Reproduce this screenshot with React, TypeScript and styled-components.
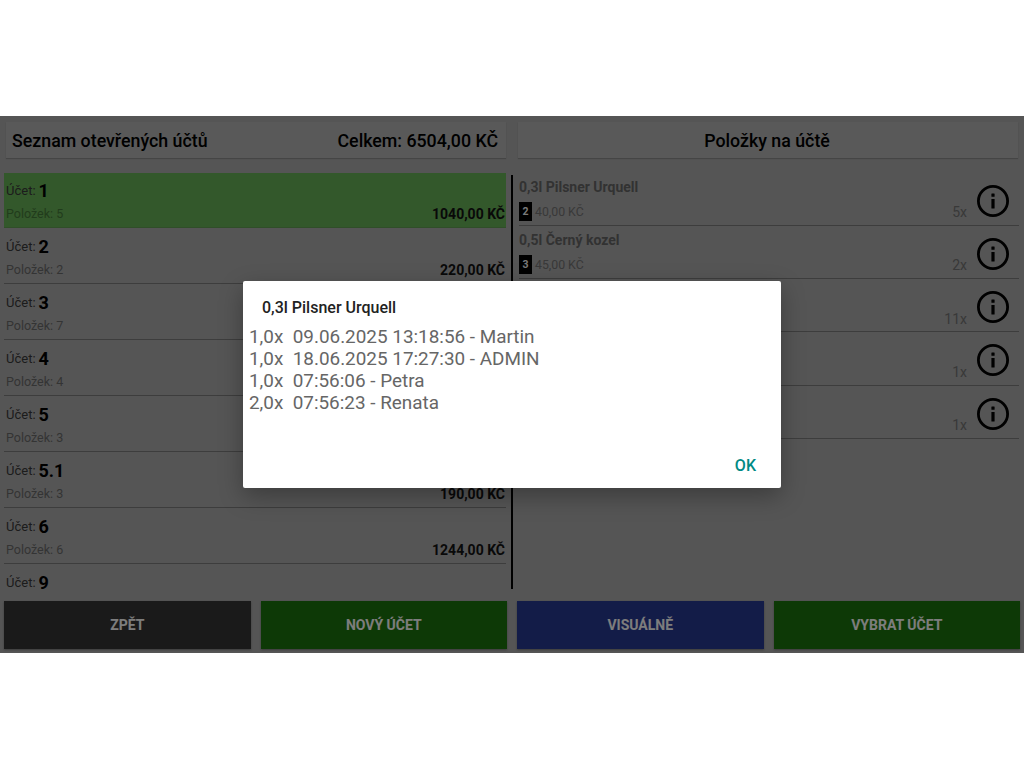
import React from 'react';
import styled, {createGlobalStyle} from 'styled-components';

const GlobalStyle = createGlobalStyle`
  html, body {
    margin: 0;
    background: #fff;
    font-family: Roboto, "Liberation Sans", sans-serif;
  }
`;

const Page = styled.div`
  height: 768px;
  display: flex;
  align-items: center;
`;

const Screen = styled.div`
  position: relative;
  width: 1024px;
  height: 537px;
  background: #9b9b9b;
  display: flex;
  flex-direction: column;
  overflow: hidden;
`;

const HeaderRow = styled.div`
  display: grid;
  grid-template-columns: 500px 500px;
  column-gap: 12px;
  padding: 6px 6px 0;
`;

const HeaderBar = styled.div<{$center?: boolean}>`
  height: 36px;
  box-sizing: border-box;
  padding: 2px 8px 0 6px;
  background: #a3a3a3;
  box-shadow: 0 1px 1px rgba(0, 0, 0, 0.18);
  display: flex;
  align-items: center;
  justify-content: ${p => (p.$center ? 'center' : 'space-between')};
  font-size: 17.8px;
  font-weight: 500;
  color: #000;
`;

const Lists = styled.div`
  height: 418px;
  margin-top: 15px;
  display: flex;
`;

const AccountList = styled.div`
  width: 502px;
  margin-left: 4px;
`;

const AccountRow = styled.div<{$active?: boolean}>`
  height: 56px;
  box-sizing: border-box;
  padding: 1px 1px 0 2px;
  background: ${p => (p.$active ? '#5ea04f' : 'transparent')};
  border-bottom: 1px solid ${p => (p.$active ? '#588f4b' : '#707070')};
  display: flex;
  flex-direction: column;

  &:first-child {
    height: 55px;
    padding-top: 0;
  }

  &:last-child {
    border-bottom: none;
  }
`;

const AccountTitle = styled.div`
  height: 30px;
  display: flex;
  align-items: flex-end;
  gap: 3px;
  font-size: 13px;
  line-height: 24px;
  color: #333;
`;

const AccountNumber = styled.span`
  font-size: 18px;
  font-weight: 700;
  color: #000;
`;

const AccountMeta = styled.div`
  display: flex;
  justify-content: space-between;
  align-items: center;
  height: 18px;
  margin-top: 2px;
`;

const MetaLabel = styled.span<{$active?: boolean}>`
  font-size: 12.5px;
  color: ${p => (p.$active ? '#3d6e33' : '#5f5f5f')};
`;

const Price = styled.span`
  font-size: 14px;
  font-weight: 700;
  color: #111;
`;

const Divider = styled.div`
  width: 2px;
  height: 414px;
  margin: 2px 6px 0 5px;
  background: #000;
`;

const ItemList = styled.div`
  width: 500px;
`;

const ItemRow = styled.div`
  height: 53.3px;
  box-sizing: border-box;
  border-bottom: 1px solid #707070;
  position: relative;
`;

const ItemName = styled.div`
  height: 29px;
  padding-top: 5px;
  box-sizing: border-box;
  font-size: 14px;
  line-height: 18px;
  font-weight: 700;
  color: #5c5c5c;
`;

const ItemMeta = styled.div`
  display: flex;
  align-items: center;
  gap: 3px;
  height: 19px;
  padding-right: 52px;
`;

const Badge = styled.span`
  width: 13px;
  height: 19px;
  background: #000;
  color: #ddd;
  font-size: 10.5px;
  font-weight: 700;
  display: flex;
  align-items: center;
  justify-content: center;
`;

const ItemPrice = styled.span`
  flex: 1;
  font-size: 12.3px;
  color: #686868;
  position: relative;
  top: 1px;
`;

const ItemQuantity = styled.span`
  font-size: 14px;
  color: #686868;
  position: relative;
  top: 1px;
`;

const InfoButton = styled.svg`
  position: absolute;
  right: 9px;
  top: 11px;
  width: 34px;
  height: 34px;
`;

const ButtonRow = styled.div`
  display: grid;
  grid-template-columns: repeat(4, 246.5px);
  column-gap: 10px;
  margin-top: 10px;
  padding-left: 4px;
  position: relative;
`;

const ActionButton = styled.div<{$color: string}>`
  height: 48px;
  box-sizing: border-box;
  padding-top: 1px;
  background: ${p => p.$color};
  box-shadow: 0 1px 2px rgba(0, 0, 0, 0.3);
  display: flex;
  align-items: center;
  justify-content: center;
  color: #e4e4e4;
  font-size: 14px;
  font-weight: 700;
`;

const Overlay = styled.div`
  position: absolute;
  inset: 0;
  background: rgba(0, 0, 0, 0.45);
  display: flex;
  align-items: center;
  justify-content: center;
`;

const Dialog = styled.div`
  width: 538px;
  height: 207px;
  background: #fff;
  border-radius: 2px;
  box-shadow: 0 8px 24px rgba(0, 0, 0, 0.3);
  box-sizing: border-box;
  padding: 17px 6px 0;
  display: flex;
  flex-direction: column;
`;

const DialogTitle = styled.div`
  padding-left: 13px;
  height: 20px;
  font-size: 16px;
  line-height: 20px;
  font-weight: 500;
  color: #222;
`;

const DialogBody = styled.div`
  flex: 1;
  margin-top: 8px;
  font-size: 18.9px;
  line-height: 22px;
  color: #666;
  white-space: pre;
`;

const DialogActions = styled.div`
  display: flex;
  justify-content: flex-end;
  padding: 0 19px 12px 0;
`;

const DialogButton = styled.span`
  font-size: 16px;
  line-height: 20px;
  font-weight: 500;
  color: #008a84;
`;

const InfoIcon = () => (
  <InfoButton viewBox="0 0 34 34" aria-hidden="true">
    <circle cx="17" cy="17" r="14.6" fill="none" stroke="#000" strokeWidth="2.8" />
    <rect x="15.4" y="15" width="3.2" height="9.4" rx="0.5" fill="#000" />
    <rect x="15.4" y="9.6" width="3.2" height="3.2" rx="0.5" fill="#000" />
  </InfoButton>
);

const accounts = [
  {id: '1', count: 5, total: '1040,00 KČ', active: true},
  {id: '2', count: 2, total: '220,00 KČ'},
  {id: '3', count: 7},
  {id: '4', count: 4},
  {id: '5', count: 3},
  {id: '5.1', count: 3, total: '190,00 KČ'},
  {id: '6', count: 6, total: '1244,00 KČ'},
  {id: '9'},
];

// rows 3-5 sit behind the dialog, only the quantity is visible
const items = [
  {name: '0,3l Pilsner Urquell', badge: '2', price: '40,00 KČ', quantity: '5x'},
  {name: '0,5l Černý kozel', badge: '3', price: '45,00 KČ', quantity: '2x'},
  {quantity: '11x'},
  {quantity: '1x'},
  {quantity: '1x'},
];

const history = [
  '1,0x  09.06.2025 13:18:56 - Martin',
  '1,0x  18.06.2025 17:27:30 - ADMIN',
  '1,0x  07:56:06 - Petra',
  '2,0x  07:56:23 - Renata',
];

const App = () => (
  <Page>
    <GlobalStyle />
    <Screen>
      <HeaderRow>
        <HeaderBar>
          <span>Seznam otevřených účtů</span>
          <span>Celkem: 6504,00 KČ</span>
        </HeaderBar>
        <HeaderBar $center>Položky na účtě</HeaderBar>
      </HeaderRow>
      <Lists>
        <AccountList>
          {accounts.map(account => (
            <AccountRow key={account.id} $active={account.active}>
              <AccountTitle>
                Účet: <AccountNumber>{account.id}</AccountNumber>
              </AccountTitle>
              {account.count && (
                <AccountMeta>
                  <MetaLabel $active={account.active}>Položek: {account.count}</MetaLabel>
                  {account.total && <Price>{account.total}</Price>}
                </AccountMeta>
              )}
            </AccountRow>
          ))}
        </AccountList>
        <Divider />
        <ItemList>
          {items.map((item, index) => (
            <ItemRow key={index}>
              <ItemName>{item.name}</ItemName>
              <ItemMeta>
                {item.badge && <Badge>{item.badge}</Badge>}
                <ItemPrice>{item.price}</ItemPrice>
                <ItemQuantity>{item.quantity}</ItemQuantity>
              </ItemMeta>
              <InfoIcon />
            </ItemRow>
          ))}
        </ItemList>
      </Lists>
      <ButtonRow>
        <ActionButton $color="#313131">ZPĚT</ActionButton>
        <ActionButton $color="#19690b">NOVÝ ÚČET</ActionButton>
        <ActionButton $color="#243383">VISUÁLNĚ</ActionButton>
        <ActionButton $color="#19690b">VYBRAT ÚČET</ActionButton>
      </ButtonRow>
      <Overlay>
        <Dialog>
          <DialogTitle>0,3l Pilsner Urquell</DialogTitle>
          <DialogBody>
            {history.map(line => (
              <div key={line}>{line}</div>
            ))}
          </DialogBody>
          <DialogActions>
            <DialogButton>OK</DialogButton>
          </DialogActions>
        </Dialog>
      </Overlay>
    </Screen>
  </Page>
);

export default App;
